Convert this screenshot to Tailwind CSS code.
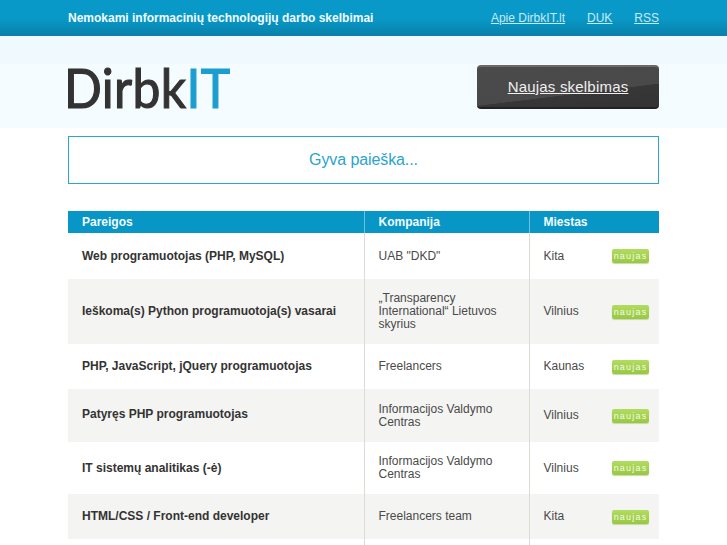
<!DOCTYPE html>
<html lang="lt">
<head>
  <meta charset="UTF-8">
  <title>DirbkIT</title>
  <script src="https://cdn.jsdelivr.net/npm/@tailwindcss/browser@4"></script>
</head>
<body class="h-[545px] overflow-hidden bg-white font-['Liberation_Sans',Arial,sans-serif] text-[12px] text-[#4a4a4a]">
  <!-- Top bar -->
  <div class="h-[37px] border-b border-[#f4fcff] bg-gradient-to-b from-[#0999c8] from-50% to-[#0880aa]">
    <div class="mx-[68px] flex h-[36px] items-center justify-between">
      <span class="font-bold text-[#f2fbff]">Nemokami informacinių technologijų darbo skelbimai</span>
      <nav class="flex gap-[22px] text-[#c5ebf8] underline">
        <a href="#">Apie DirbkIT.lt</a>
        <a href="#">DUK</a>
        <a href="#">RSS</a>
      </nav>
    </div>
  </div>

  <!-- Header -->
  <div class="h-[91px] bg-gradient-to-b from-[#eff9fe] from-30% to-[#f5fcff] to-30%">
    <div class="mx-[68px] flex items-start justify-between pt-[28px]">
      <a href="#" class="-mt-[11px] -ml-[4px] w-[170px] origin-left scale-x-[0.905] font-['Lato',sans-serif] text-[55px] leading-[66px] tracking-[0.4px] whitespace-nowrap text-[#333] [-webkit-text-stroke:1.2px_currentColor]">Dirbk<span class="text-[#1c9dcf]">IT</span></a>
      <a href="#" class="flex h-[44px] w-[182px] items-center justify-center rounded-[4px] border-t-2 border-b-2 border-t-[#6a6a6a] border-b-[#222] bg-[linear-gradient(173deg,#4a4b4a_0%,#484948_62%,#373737_63%,#333_100%)] text-[15px] tracking-[0.2px] text-[#f0f0f0] underline">Naujas skelbimas</a>
    </div>
  </div>

  <!-- Search -->
  <div class="mx-[68px] mt-[8px] flex h-[48px] items-center justify-center border border-[#2ba5d3] text-[16px] tracking-[-0.1px] text-[#2ba3d0]">Gyva paieška...</div>

  <!-- Jobs -->
  <table class="mx-[68px] mt-[27px] w-[591px] table-fixed border-collapse">
    <colgroup>
      <col class="w-[296px]">
      <col class="w-[165px]">
      <col class="w-[130px]">
    </colgroup>
    <thead>
      <tr class="h-[22px] bg-[#0896c6] text-left font-bold text-[#f2fbff]">
        <th class="px-[14px] font-bold">Pareigos</th>
        <th class="border-l border-[#6cc0e0] px-[14px] font-bold">Kompanija</th>
        <th class="border-l border-[#6cc0e0] px-[14px] font-bold">Miestas</th>
      </tr>
    </thead>
    <tbody class="leading-[13px]">
      <tr class="h-[46px]">
        <td class="px-[14px] font-bold text-[#333]">Web programuotojas (PHP, MySQL)</td>
        <td class="border-l border-[#dcdcd4] px-[14px]">UAB "DKD"</td>
        <td class="border-l border-[#dcdcd4] pl-[14px] pr-[10px]"><div class="flex items-center justify-between">Kita<span class="h-[14px] w-[37px] rounded-[2px] bg-gradient-to-b from-[#b2dc60] to-[#98c842] text-center text-[9px] leading-[14px] tracking-[1.2px] text-[#f4fae6] shadow-[0_1px_1px_#c8d8a8]">naujas</span></div></td>
      </tr>
      <tr class="h-[65px] bg-[#f4f4f2]">
        <td class="px-[14px] font-bold text-[#333]">Ieškoma(s) Python programuotoja(s) vasarai</td>
        <td class="border-l border-[#dcdcd4] px-[14px]">„Transparency International“ Lietuvos skyrius</td>
        <td class="border-l border-[#dcdcd4] pl-[14px] pr-[10px]"><div class="flex items-center justify-between">Vilnius<span class="h-[14px] w-[37px] rounded-[2px] bg-gradient-to-b from-[#b2dc60] to-[#98c842] text-center text-[9px] leading-[14px] tracking-[1.2px] text-[#f4fae6] shadow-[0_1px_1px_#c8d8a8]">naujas</span></div></td>
      </tr>
      <tr class="h-[45px]">
        <td class="px-[14px] font-bold text-[#333]">PHP, JavaScript, jQuery programuotojas</td>
        <td class="border-l border-[#dcdcd4] px-[14px]">Freelancers</td>
        <td class="border-l border-[#dcdcd4] pl-[14px] pr-[10px]"><div class="flex items-center justify-between">Kaunas<span class="h-[14px] w-[37px] rounded-[2px] bg-gradient-to-b from-[#b2dc60] to-[#98c842] text-center text-[9px] leading-[14px] tracking-[1.2px] text-[#f4fae6] shadow-[0_1px_1px_#c8d8a8]">naujas</span></div></td>
      </tr>
      <tr class="h-[53px] bg-[#f4f4f2]">
        <td class="px-[14px] pb-[2px] font-bold text-[#333]">Patyręs PHP programuotojas</td>
        <td class="border-l border-[#dcdcd4] px-[14px]">Informacijos Valdymo Centras</td>
        <td class="border-l border-[#dcdcd4] pl-[14px] pr-[10px]"><div class="flex items-center justify-between">Vilnius<span class="h-[14px] w-[37px] rounded-[2px] bg-gradient-to-b from-[#b2dc60] to-[#98c842] text-center text-[9px] leading-[14px] tracking-[1.2px] text-[#f4fae6] shadow-[0_1px_1px_#c8d8a8]">naujas</span></div></td>
      </tr>
      <tr class="h-[52px]">
        <td class="px-[14px] font-bold text-[#333]">IT sistemų analitikas (-ė)</td>
        <td class="border-l border-[#dcdcd4] px-[14px]">Informacijos Valdymo Centras</td>
        <td class="border-l border-[#dcdcd4] pl-[14px] pr-[10px]"><div class="flex items-center justify-between">Vilnius<span class="h-[14px] w-[37px] rounded-[2px] bg-gradient-to-b from-[#b2dc60] to-[#98c842] text-center text-[9px] leading-[14px] tracking-[1.2px] text-[#f4fae6] shadow-[0_1px_1px_#c8d8a8]">naujas</span></div></td>
      </tr>
      <tr class="h-[45px] bg-[#f4f4f2]">
        <td class="px-[14px] font-bold text-[#333]">HTML/CSS / Front-end developer</td>
        <td class="border-l border-[#dcdcd4] px-[14px]">Freelancers team</td>
        <td class="border-l border-[#dcdcd4] pl-[14px] pr-[10px]"><div class="flex items-center justify-between">Kita<span class="h-[14px] w-[37px] rounded-[2px] bg-gradient-to-b from-[#b2dc60] to-[#98c842] text-center text-[9px] leading-[14px] tracking-[1.2px] text-[#f4fae6] shadow-[0_1px_1px_#c8d8a8]">naujas</span></div></td>
      </tr>
      <tr class="h-[45px]">
        <td></td>
        <td class="border-l border-[#dcdcd4]"></td>
        <td class="border-l border-[#dcdcd4]"></td>
      </tr>
    </tbody>
  </table>
</body>
</html>
